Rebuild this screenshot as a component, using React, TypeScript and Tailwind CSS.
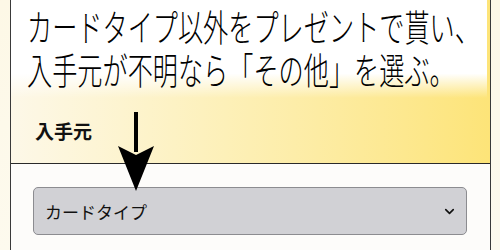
import { ChevronDown } from "lucide-react";

export default function App() {
  return (
    <div className="relative w-[500px] h-[250px] overflow-hidden bg-gradient-to-b from-[#fdf8e6] to-[#fdfaee] font-['Noto_Sans_CJK_JP',sans-serif] text-[#111]">
      {/* card */}
      <div className="ml-[10px] w-[481px] h-full flex flex-col border-x border-[#3a3a3a]">
        <div className="h-[164px] shrink-0 flex flex-col justify-end pb-[23px] pl-[24px] border-b border-[#2a2a2a] bg-gradient-to-r from-[#fdf8e8] via-[#fdf0b8] via-45% to-[#fde478]">
          <span className="text-[19px] font-bold leading-none">入手元</span>
        </div>
        <div className="flex-1 bg-[#fdfcfa] pt-[23px] pl-[22px] pr-[23px]">
          <div className="h-[48px] flex items-center justify-between pl-[11px] pr-[9px] rounded-[5px] border border-[#8c8c90] bg-[#d1d1d5]">
            <span className="text-[17px] leading-none">カードタイプ</span>
            <ChevronDown className="size-[15px] text-[#111]" strokeWidth={2.6} />
          </div>
        </div>
      </div>

      {/* caption */}
      <div className="absolute top-0 left-[11px] w-[476px] h-[98px] bg-gradient-to-b from-white from-75% to-transparent pl-[16px] pt-[5px]">
        <div className="origin-left scale-x-[0.68] w-[660px] text-[37px] font-light leading-[43px] whitespace-nowrap text-black">
          <p>カードタイプ以外をプレゼントで貰い、</p>
          <p>入手元が不明なら「その他」を選ぶ。</p>
        </div>
      </div>

      {/* arrow */}
      <svg className="absolute left-[117px] top-[112px]" width="38" height="80" viewBox="0 0 38 80">
        <rect x="17" y="0" width="4" height="40" fill="#000" />
        <path d="M1 34 L19 79 L37 34 L19 43 Z" fill="#000" />
      </svg>
    </div>
  );
}
